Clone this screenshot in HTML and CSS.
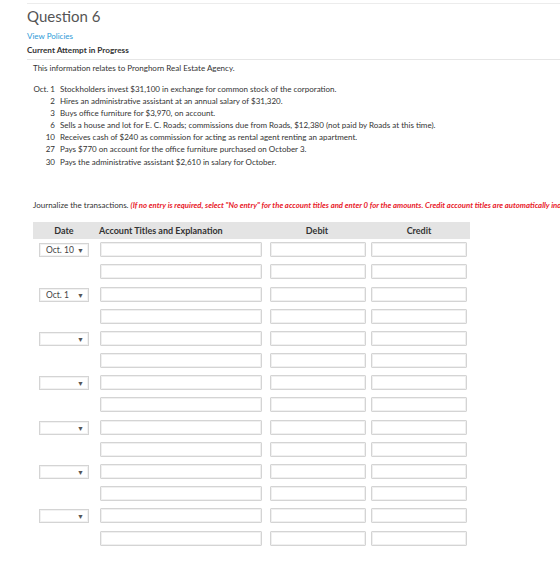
FILE: index.html
```html
<!DOCTYPE html>
<html lang="en">
<head>
<meta charset="UTF-8">
<meta name="viewport" content="width=device-width, initial-scale=1.0">
<title>Question 6</title>
<link rel="stylesheet" href="styles.css">
</head>
<body>

<div class="question">
  <h2 class="q-title">Question 6</h2>
  <a class="policies" href="#">View Policies</a>
  <div class="attempt">Current Attempt in Progress</div>

  <div class="q-body">
    <p class="intro">This information relates to Pronghorn Real Estate Agency.</p>

    <!-- transactions for October -->
    <div class="trans">
      <span class="day">Oct. 1</span><span>Stockholders invest $31,100 in exchange for common stock of the corporation.</span>
      <span class="day">2</span><span>Hires an administrative assistant at an annual salary of $31,320.</span>
      <span class="day">3</span><span>Buys office furniture for $3,970, on account.</span>
      <span class="day">6</span><span>Sells a house and lot for E. C. Roads; commissions due from Roads, $12,380 (not paid by Roads at this time).</span>
      <span class="day">10</span><span>Receives cash of $240 as commission for acting as rental agent renting an apartment.</span>
      <span class="day">27</span><span>Pays $770 on account for the office furniture purchased on October 3.</span>
      <span class="day">30</span><span>Pays the administrative assistant $2,610 in salary for October.</span>
    </div>

    <p class="instr">Journalize the transactions. <em class="note">(If no entry is required, select "No entry" for the account titles and enter 0 for the amounts. Credit account titles are automatically indented when the amount is entered. Do not indent manually.)</em></p>

    <!-- journal table -->
    <div class="journal">
      <div class="jhead c-date">Date</div>
      <div class="jhead c-acct">Account Titles and Explanation</div>
      <div class="jhead c-num">Debit</div>
      <div class="jhead c-num">Credit</div>
    </div>
    <div class="journal rows" id="rows"></div>
  </div>
</div>

<script>
// seven entries, two lines each
var dates = ["Oct. 10", "Oct. 1", "", "", "", "", ""];
var rows = document.getElementById("rows");
var html = "";
for (var i = 0; i < dates.length; i++) {
  for (var line = 0; line < 2; line++) {
    if (line == 0) {
      html += '<div class="c-date"><div class="dsel"><span>' + dates[i] + '</span><span class="arrow">&#9660;</span></div></div>';
    } else {
      html += '<div class="c-date"></div>';
    }
    html += '<div class="c-acct"><input type="text" class="acct"></div>';
    html += '<div class="c-debit"><input type="text" class="amt"></div>';
    html += '<div class="c-credit"><input type="text" class="amt"></div>';
  }
}
rows.innerHTML = html;
</script>

</body>
</html>
```

FILE: styles.css
```css
body {
  margin: 0;
  font-family: Lato, "Open Sans", sans-serif;
  color: #333;
  background: #fff;
  overflow: hidden;
}

.question {
  margin-top: 3px;
  margin-left: 27px;
  border-top: 1px solid #ececec;
}

.q-title {
  margin: 3px 0 0;
  font-size: 15px;
  font-weight: normal;
  line-height: 19px;
  color: #555;
}

.policies {
  display: block;
  margin-top: 5px;
  font-size: 8px;
  line-height: 10px;
  color: #2b9ad8;
  text-decoration: none;
}

.attempt {
  margin-top: 4px;
  font-size: 8.2px;
  font-weight: bold;
  line-height: 10px;
  color: #333;
}

.q-body {
  margin-top: 4px;
  border-top: 1px solid #e6e6e6;
  padding-left: 6px;
  font-size: 8px;
  color: #333;
}

.intro {
  margin: 3px 0 0;
  line-height: 10px;
}

.trans {
  display: grid;
  grid-template-columns: 22px auto;
  column-gap: 5px;
  margin-top: 10px;
  line-height: 12.1px;
  white-space: nowrap;
}

.trans .day {
  text-align: right;
}

.instr {
  margin: 32.5px 0 0;
  line-height: 10px;
  white-space: nowrap;
}

.note {
  color: #e8202a;
  font-weight: bold;
  font-size: 7.75px;
}

/* table */
.journal {
  display: grid;
  grid-template-columns: 62px 171px 102px 102px;
  width: 437px;
}

.journal .jhead {
  background: #e4e4e4;
  height: 17px;
  line-height: 17px;
  font-size: 9px;
  font-weight: bold;
  color: #333;
  margin-top: 12px;
}

.jhead.c-date,
.jhead.c-num {
  text-align: center;
}

.jhead.c-acct {
  padding-left: 4px;
}

.rows {
  margin-top: 3px;
  row-gap: 7.2px;
}

.c-acct { padding-left: 5px; }
.c-debit { padding-left: 4px; }
.c-credit { padding-left: 3px; }

input[type="text"] {
  display: block;
  box-sizing: border-box;
  height: 15px;
  margin: 0;
  padding: 0 3px;
  border: 1px solid #d4d4d4;
  box-shadow: inset 0 0 0 1px #f0f0f0;
  border-radius: 1px;
  background: #fff;
}

input.acct { width: 162px; }
input.amt { width: 96px; }

.dsel {
  box-sizing: border-box;
  width: 50px;
  height: 14px;
  margin-left: 6px;
  margin-top: 1px;
  padding: 0 4px 0 6px;
  border: 1px solid #d4d4d4;
  box-shadow: inset 0 0 0 1px #f2f2f2;
  display: flex;
  align-items: center;
  justify-content: space-between;
  font-size: 8.5px;
  color: #444;
}

.dsel .arrow {
  font-size: 7px;
  color: #555;
}
```
